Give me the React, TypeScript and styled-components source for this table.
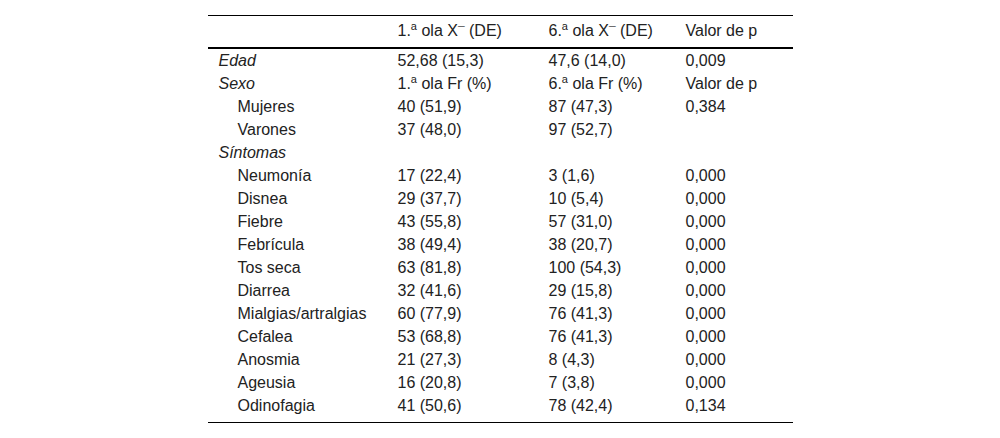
import React from "react";
import styled, { createGlobalStyle } from "styled-components";

const GlobalStyle = createGlobalStyle`
  html, body {
    margin: 0;
    padding: 0;
    background: #ffffff;
  }
  body {
    font-family: "Liberation Sans", Arial, sans-serif;
    color: #222222;
  }
`;

const Page = styled.div`
  padding-top: 15px;
`;

const Table = styled.table`
  width: 585px;
  margin: 0 auto;
  border-collapse: separate;
  border-spacing: 0;
  table-layout: fixed;
  font-size: 16px;
  line-height: 23px;
  border-top: 1px solid #000;
  border-bottom: 1px solid #000;
`;

const HeadCell = styled.th`
  text-align: left;
  font-weight: normal;
  padding: 3px 11px 5px;
  border-bottom: 2px solid #000;
  white-space: nowrap;
`;

const Cell = styled.td<{ $indent?: boolean; $italic?: boolean }>`
  padding: 0 11px 0 ${(p) => (p.$indent ? 30 : 11)}px;
  height: 23px;
  white-space: nowrap;
  font-style: ${(p) => (p.$italic ? "italic" : "normal")};
`;

const Row = styled.tr`
  &:last-child td {
    padding-bottom: 5px;
  }
`;

const Sup = styled.sup`
  font-size: 11px;
  line-height: 0;
  vertical-align: 6px;
`;

const Macron = styled.span`
  font-size: 12px;
  line-height: 0;
`;

type RowData = { label: string; kind: "group" | "item"; values: React.ReactNode[] };

const Ord = ({ n }: { n: number }) => (
  <>
    {n}.<Sup>a</Sup>
  </>
);

const rows: RowData[] = [
  { label: "Edad", kind: "group", values: ["52,68 (15,3)", "47,6 (14,0)", "0,009"] },
  {
    label: "Sexo",
    kind: "group",
    values: [
      <><Ord n={1} /> ola Fr (%)</>,
      <><Ord n={6} /> ola Fr (%)</>,
      "Valor de p",
    ],
  },
  { label: "Mujeres", kind: "item", values: ["40 (51,9)", "87 (47,3)", "0,384"] },
  { label: "Varones", kind: "item", values: ["37 (48,0)", "97 (52,7)", ""] },
  { label: "Síntomas", kind: "group", values: ["", "", ""] },
  { label: "Neumonía", kind: "item", values: ["17 (22,4)", "3 (1,6)", "0,000"] },
  { label: "Disnea", kind: "item", values: ["29 (37,7)", "10 (5,4)", "0,000"] },
  { label: "Fiebre", kind: "item", values: ["43 (55,8)", "57 (31,0)", "0,000"] },
  { label: "Febrícula", kind: "item", values: ["38 (49,4)", "38 (20,7)", "0,000"] },
  { label: "Tos seca", kind: "item", values: ["63 (81,8)", "100 (54,3)", "0,000"] },
  { label: "Diarrea", kind: "item", values: ["32 (41,6)", "29 (15,8)", "0,000"] },
  { label: "Mialgias/artralgias", kind: "item", values: ["60 (77,9)", "76 (41,3)", "0,000"] },
  { label: "Cefalea", kind: "item", values: ["53 (68,8)", "76 (41,3)", "0,000"] },
  { label: "Anosmia", kind: "item", values: ["21 (27,3)", "8 (4,3)", "0,000"] },
  { label: "Ageusia", kind: "item", values: ["16 (20,8)", "7 (3,8)", "0,000"] },
  { label: "Odinofagia", kind: "item", values: ["41 (50,6)", "78 (42,4)", "0,134"] },
];

export default function App() {
  return (
    <>
      <GlobalStyle />
      <Page>
        <Table>
          <colgroup>
            <col style={{ width: 179 }} />
            <col style={{ width: 151 }} />
            <col style={{ width: 137 }} />
            <col style={{ width: 118 }} />
          </colgroup>
          <thead>
            <tr>
              <HeadCell />
              <HeadCell>
                <Ord n={1} /> ola X<Macron>¯</Macron> (DE)
              </HeadCell>
              <HeadCell>
                <Ord n={6} /> ola X<Macron>¯</Macron> (DE)
              </HeadCell>
              <HeadCell>Valor de p</HeadCell>
            </tr>
          </thead>
          <tbody>
            {rows.map((r) => (
              <Row key={r.label}>
                <Cell $indent={r.kind === "item"} $italic={r.kind === "group"}>
                  {r.label}
                </Cell>
                {r.values.map((v, i) => (
                  <Cell key={i}>{v}</Cell>
                ))}
              </Row>
            ))}
          </tbody>
        </Table>
      </Page>
    </>
  );
}
